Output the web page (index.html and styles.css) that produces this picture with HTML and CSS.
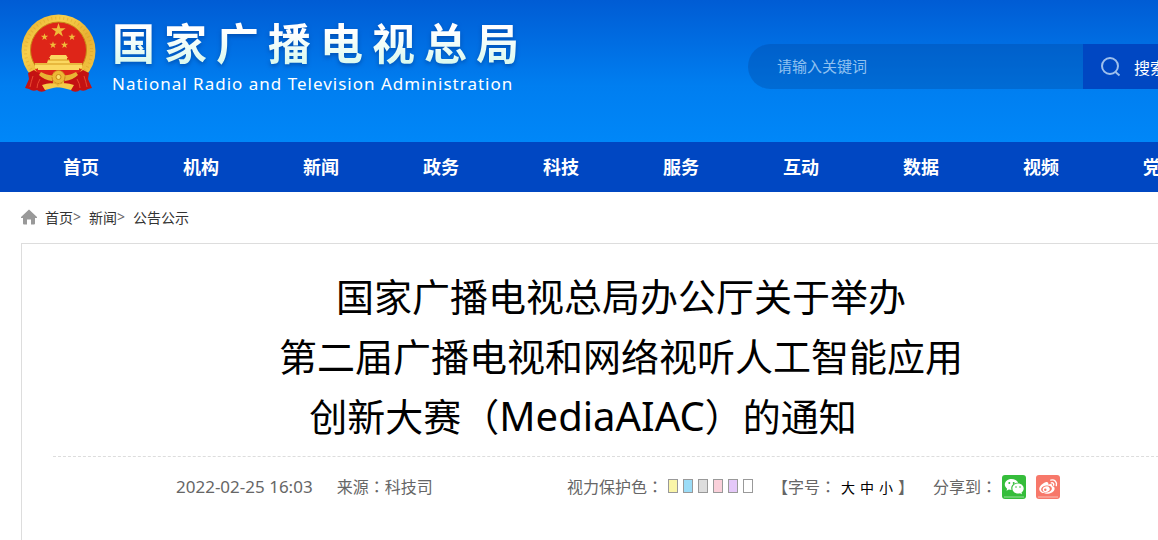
FILE: index.html
```html
<!DOCTYPE html>
<html lang="zh-CN">
<head>
    <meta charset="utf-8">
    <title>国家广播电视总局</title>
    <link rel="stylesheet" href="styles.css">
</head>

<body>
    <header class="header">
        <div class="wrap header-inner">
            <a href="#" class="logo">
                <svg class="emblem" viewBox="0 0 75 80" aria-hidden="true">
                    <defs>
                        <linearGradient id="gold" x1="0" y1="0" x2="1" y2="1">
                            <stop offset="0" stop-color="#e2a628" />
                            <stop offset="0.3" stop-color="#f8d04c" />
                            <stop offset="0.6" stop-color="#e8b032" />
                            <stop offset="1" stop-color="#f6cc48" />
                        </linearGradient>
                        <polygon id="star" points="0,-10 2.3,-3.1 9.5,-3.1 3.7,1.2 5.9,8.1 0,3.8 -5.9,8.1 -3.7,1.2 -9.5,-3.1 -2.3,-3.1" />
                    </defs>
                    <ellipse cx="37.500" cy="37" rx="37" ry="36.500" fill="url(#gold)" />
                    <circle cx="37.500" cy="37" r="33" fill="none" stroke="#c98a18" stroke-width="3" stroke-dasharray="1 3" opacity="0.3" />
                    <circle cx="37.500" cy="36" r="28" fill="#de2518" stroke="#c98a18" />
                    <path d="M14 55h47l-6 10H20z" fill="#de2518" />
                    <g fill="#f0bc3a">
                        <use href="#star" transform="translate(37.500 16.500) scale(0.75)" />
                        <use href="#star" transform="translate(23.500 23) scale(0.38)" />
                        <use href="#star" transform="translate(51 23) scale(0.38)" />
                        <use href="#star" transform="translate(32 31) scale(0.38)" />
                        <use href="#star" transform="translate(43.500 31) scale(0.38)" />
                    </g>
                    <path d="M30 41h15l2 3H28zM29 44h17v2H29zM27 46h21l1 3H26zM14 49h47v5h-3v2H17v-2h-3z" fill="#fbd860" />
                    <path d="M27 46h21M14 50h47" stroke="#d59a1c" />
                    <path d="M13 56q9 7 18 5l1 8-8 8q-5 2-8-1-4 2-8-1l-4-1 4-9-1-6z" fill="#c41212" />
                    <path d="M62 56q-9 7-18 5l-1 8 8 8q5 2 8-1 4 2 8-1l4-1-4-9 1-6z" fill="#c41212" />
                    <path d="M12 62q-2 6-3 11M19 65q-3 5-3 9M56 65q3 5 3 9M63 62q2 6 3 11" fill="none" stroke="#e84a30" />
                    <path d="M20 58q8 4 12 3l-1 6q-8-1-13-6zM55 58q-8 4-12 3l1 6q8-1 13-6z" fill="#e8b434" />
                    <path d="M21 71q8-3 13-1l3 2 3-2q5-2 13 1l-3 5-12-3h-2l-12 3z" fill="#f6ca48" />
                    <circle cx="37.500" cy="63" r="6.500" fill="#edb836" stroke="#c98a18" stroke-dasharray="2 1" />
                    <circle cx="37.500" cy="63" r="2.500" fill="#fbe070" stroke="#c98a18" />
                </svg>
                <span class="logo-text">
                    <span class="logo-cn">国家广播电视总局</span>
                    <span class="logo-en">National Radio and Television Administration</span>
                </span>
            </a>
            <form class="search">
                <input type="text" class="search-input" placeholder="请输入关键词" aria-label="请输入关键词">
                <button type="submit" class="search-button">
                    <svg class="search-icon" viewBox="0 0 20 20" aria-hidden="true">
                        <circle cx="9" cy="9" r="8" />
                        <path d="M14.5 15l4 3.5" />
                    </svg>
                    搜索
                </button>
            </form>
        </div>
    </header>

    <nav class="nav">
        <div class="wrap nav-list">
            <a href="#">首页</a>
            <a href="#">机构</a>
            <a href="#">新闻</a>
            <a href="#">政务</a>
            <a href="#">科技</a>
            <a href="#">服务</a>
            <a href="#">互动</a>
            <a href="#">数据</a>
            <a href="#">视频</a>
            <a href="#">党建</a>
        </div>
    </nav>

    <main class="wrap main">
        <div class="crumbs">
            <svg class="home-icon" viewBox="0 0 16 16" aria-hidden="true">
                <path d="M8 0.500L0 8v1h2v5.500q0 1 1 1h3v-5h4v5h3q1 0 1-1V9h2V8z" />
            </svg>
            <a href="#">首页</a>&gt;
            <a href="#">新闻</a>&gt;
            <a href="#">公告公示</a>
        </div>

        <article class="article">
            <h1 class="title">国家广播电视总局办公厅关于举办<br>第二届广播电视和网络视听人工智能应用<br>创新大赛（<span class="latin">MediaAIAC</span>）的通知&emsp;&emsp;</h1>

            <div class="meta">
                <div class="source">
                    <span class="date">2022-02-25 16:03</span>
                    <span>来源<span class="colon" lang="zh-TW">：</span>科技司</span>
                </div>
                <div class="tools">
                    <div class="colors">
                        <span>视力保护色<span class="colon" lang="zh-TW">：</span></span>
                        <button type="button" class="swatch yellow" aria-label="黄色"></button>
                        <button type="button" class="swatch blue" aria-label="蓝色"></button>
                        <button type="button" class="swatch gray" aria-label="灰色"></button>
                        <button type="button" class="swatch pink" aria-label="粉色"></button>
                        <button type="button" class="swatch purple" aria-label="紫色"></button>
                        <button type="button" class="swatch white" aria-label="白色"></button>
                    </div>
                    <div class="sizes">
                        <span>【字号<span class="colon" lang="zh-TW">：</span></span>
                        <button type="button">大</button>
                        <button type="button">中</button>
                        <button type="button">小</button>
                        <span>】</span>
                    </div>
                    <div class="share">
                        <span>分享到<span class="colon" lang="zh-TW">：</span></span>
                        <a href="#" class="share-link wechat" aria-label="微信">
                            <svg viewBox="0 0 24 24" aria-hidden="true">
                                <path fill="#fff" d="M9.500 4C5.400 4 2.800 6.600 2.800 9.600c0 1.700.9 3.200 2.300 4.200l-.6 2 2.400-1.200c.8.300 1.700.400 2.600.400-1.200-4.200 2.200-7.300 6.700-7.200C15.500 5.500 12.800 4 9.500 4z" />
                                <path fill="#fff" d="M16 8.600c-3.300 0-5.600 2.200-5.600 4.900 0 2.800 2.400 5 5.600 5 .7 0 1.400-.1 2-.3l2 1.100-.5-1.800c1.300-.9 2.200-2.300 2.200-4 0-2.700-2.500-4.900-5.700-4.900z" />
                                <g fill="#35bd3b">
                                    <circle cx="7.300" cy="8" r="1" />
                                    <circle cx="11.700" cy="8" r="1" />
                                    <circle cx="14" cy="12" r="0.800" />
                                    <circle cx="18" cy="12" r="0.800" />
                                </g>
                                <path d="M2 22h20" stroke="#9be09e" />
                            </svg>
                        </a>
                        <a href="#" class="share-link weibo" aria-label="微博">
                            <svg viewBox="0 0 24 24" aria-hidden="true">
                                <path fill="#fff" d="M9.500 7.300C11.500 6.500 12.800 7.500 12.300 9.500c2.400-1 4.600-.6 3.900 1.600 1.800.5 2.600 1.500 2.400 2.800-.4 2.700-3.800 4.800-8 4.800-4 0-7.300-1.700-7.300-4.700 0-2.500 3-5.600 6.200-6.700z" />
                                <ellipse cx="10.500" cy="14" rx="5.400" ry="3.500" transform="rotate(-7 10.500 14)" fill="#f7786a" />
                                <ellipse cx="10.200" cy="14.200" rx="3.600" ry="2.800" transform="rotate(-15 10.200 14.200)" fill="#fff" />
                                <circle cx="9.300" cy="14.800" r="1.200" fill="#f7786a" />
                                <path fill="none" stroke="#fff" stroke-width="1.400" stroke-linecap="round" d="M14.800 5.100c3.800-.9 6.600 2 5.500 5.500M15.300 7.900c1.700-.4 2.800.7 2.300 2.300" />
                                <path d="M2 22h20" stroke="#fbc0b8" />
                            </svg>
                        </a>
                    </div>
                </div>
            </div>
        </article>
    </main>
</body>

</html>
```
FILE: styles.css
```css
html {
    overflow: hidden;
}

body {
    display: flex;
    flex-direction: column;
    min-width: 1242px;
    min-height: 100vh;
    margin: 0;
    font-family: "Noto Sans", "Noto Sans CJK SC", sans-serif;
    font-size: 16px;
    color: #666;
    background: #fff;
}

a {
    color: inherit;
    text-decoration: none;
}

button {
    padding: 0;
    border: 0;
    font-family: inherit;
    cursor: pointer;
}

.wrap {
    box-sizing: border-box;
    width: 100%;
    padding: 0 21px;
}

/* header */
.header {
    height: 142px;
    background: linear-gradient(#005cd4, #007ef0 60%, #0087f8);
}

.header-inner {
    display: flex;
    justify-content: space-between;
    align-items: flex-start;
}

.logo {
    display: flex;
    gap: 16px;
    padding-top: 14px;
}

.emblem {
    width: 75px;
    height: 80px;
}

.logo-text {
    display: flex;
    flex-direction: column;
    white-space: nowrap;
}

.logo-cn {
    font-size: 43px;
    font-weight: bold;
    line-height: 60px;
    letter-spacing: 9px;
    color: transparent;
    background: linear-gradient(#fff 30%, #d8f9ee 85%);
    -webkit-background-clip: text;
    background-clip: text;
    filter: drop-shadow(0 2px 2px rgba(0, 50, 130, 0.5));
}

.logo-en {
    font-size: 17px;
    line-height: 20px;
    letter-spacing: 1px;
    color: #fff;
}

.search {
    display: flex;
    width: 473px;
    height: 45px;
    margin-top: 44px;
    border-radius: 23px;
    overflow: hidden;
}

.search-input {
    flex: 1;
    min-width: 0;
    padding: 0 29px 2px;
    border: 0;
    font-family: inherit;
    font-size: 15px;
    color: #fff;
    background: rgba(0, 72, 160, 0.35);
}

.search-input::placeholder {
    color: #8fc1f0;
}

.search-button {
    display: flex;
    align-items: center;
    gap: 13px;
    width: 138px;
    padding-left: 18px;
    font-size: 16px;
    color: #fff;
    background: #0047c2;
}

.search-icon {
    width: 20px;
    height: 20px;
    fill: none;
    stroke: #9dbfec;
    stroke-width: 2;
}

/* nav */
.nav {
    background: #0047c2;
}

.nav-list {
    display: flex;
}

.nav-list a {
    flex: 1;
    font-size: 18px;
    font-weight: bold;
    line-height: 50px;
    text-align: center;
    color: #fff;
}

/* content */
.main {
    display: flex;
    flex: 1;
    flex-direction: column;
}

.crumbs {
    display: flex;
    align-items: center;
    box-sizing: border-box;
    height: 51px;
    padding-bottom: 2px;
    font-size: 14px;
}

.crumbs a {
    color: #333;
}

.crumbs a + a {
    margin-left: 8px;
}

.home-icon {
    width: 16px;
    height: 16px;
    margin-right: 8px;
    fill: #999;
}

.article {
    flex: 1;
    padding: 22px 31px;
    border: 1px solid #ddd;
    border-bottom: 0;
}

.title {
    margin: 0;
    padding-bottom: 10px;
    border-bottom: 1px dashed #ddd;
    font-size: 38px;
    font-weight: normal;
    line-height: 60px;
    text-align: center;
    color: #000;
}

.latin {
    font-size: 40px;
    line-height: 1;
}

.meta {
    display: flex;
    justify-content: space-between;
    padding: 18px 129px 0 123px;
    line-height: 24px;
}

.source,
.tools,
.colors,
.sizes,
.share {
    display: flex;
    align-items: center;
}

.source {
    gap: 24px;
}

.date {
    font-size: 17px;
}

.tools {
    gap: 19px;
}

/* full-width colon set in the middle of its cell */
.colon {
    font-family: "Noto Sans CJK TC", sans-serif;
    line-height: 1;
}

.colors {
    gap: 5px;
}

.swatch {
    box-sizing: border-box;
    width: 10px;
    height: 14px;
    margin-bottom: 3px;
    border: 1px solid #999;
}

.yellow {
    background: #faf5a8;
}

.blue {
    background: #9bdcf7;
}

.gray {
    background: #ddd;
}

.pink {
    background: #fad0da;
}

.purple {
    background: #e4c8f8;
}

.white {
    background: #fff;
}

.sizes {
    gap: 5px;
}

.sizes button {
    font-size: 14px;
    color: #000;
    background: none;
}

.share {
    gap: 5px;
}

.share-link {
    width: 24px;
    height: 24px;
    border-radius: 3px;
}

.share-link + .share-link {
    margin-left: 5px;
}

.share-link svg {
    display: block;
}

.wechat {
    background: #35bd3b;
}

.weibo {
    background: #f7786a;
}
```
